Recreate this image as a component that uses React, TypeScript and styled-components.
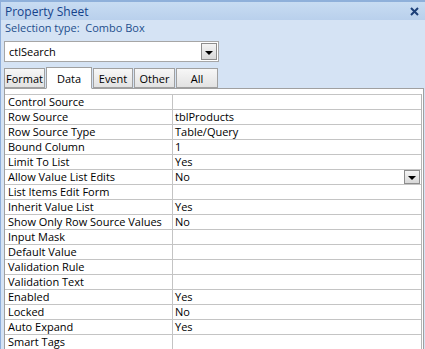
import React from "react";
import styled, { createGlobalStyle } from "styled-components";

const GlobalStyle = createGlobalStyle`
  html, body { margin: 0; padding: 0; background: #d5e3f4; }
  body { font-family: "Open Sans", "Noto Sans", sans-serif; }
`;

const Panel = styled.div`
  width: 425px;
  height: 349px;
  overflow: hidden;
  background: #d5e3f4;
  border-left: 1px solid #8eaedb;
  box-sizing: border-box;
  display: flex;
  flex-direction: column;
`;

const TitleBar = styled.div`
  height: 20px;
  box-sizing: border-box;
  border-top: 2px solid #8fb0da;
  background: linear-gradient(#c8dcf2, #b9d0ec);
  display: flex;
  align-items: center;
  justify-content: space-between;
  padding: 0 6px 0 4px;
  color: #15428b;
  font-size: 12px;
`;

const CloseIcon = styled.svg`
  width: 9px;
  height: 9px;
`;

const SelectionType = styled.div`
  height: 16px;
  padding: 0 4px;
  color: #1d4f8d;
  font-size: 11px;
  line-height: 16px;
  white-space: pre;
`;

const ComboRow = styled.div`
  padding: 5px 0 0 3px;
`;

const Combo = styled.div`
  width: 215px;
  height: 21px;
  box-sizing: border-box;
  border: 1px solid #a6a6a6;
  background: #fff;
  display: flex;
  align-items: center;
  justify-content: space-between;
  padding: 0 1px 0 4px;
  font-size: 11px;
`;

const DropButton = styled.div<{ $w: number; $h: number }>`
  width: ${(p) => p.$w}px;
  height: ${(p) => p.$h}px;
  box-sizing: border-box;
  border: 1px solid #8d8d8d;
  background: linear-gradient(#f4f4f4, #d8d8d8);
  display: flex;
  align-items: center;
  justify-content: center;
`;

const Arrow = styled.div`
  width: 0;
  height: 0;
  border-left: 4px solid transparent;
  border-right: 4px solid transparent;
  border-top: 4px solid #000;
  margin-top: 2px;
`;

const TabRow = styled.div`
  display: flex;
  align-items: flex-end;
  gap: 1px;
  padding: 5px 0 0 3px;
  height: 21px;
  box-sizing: content-box;
  position: relative;
  z-index: 1;
`;

const Tab = styled.div<{ $active?: boolean; $w: number }>`
  width: ${(p) => p.$w}px;
  height: ${(p) => (p.$active ? 22 : 20)}px;
  box-sizing: border-box;
  border: 1px solid #a0a0a0;
  border-bottom: ${(p) => (p.$active ? "1px solid #fff" : "1px solid #a0a0a0")};
  background: ${(p) =>
    p.$active ? "#fff" : "linear-gradient(#f7f7f7, #e2e2e2)"};
  font-size: 11px;
  display: flex;
  align-items: center;
  justify-content: center;
  margin-bottom: ${(p) => (p.$active ? -1 : 0)}px;
`;

const Grid = styled.div`
  margin-left: 3px;
  width: 420px;
  flex: 1;
  box-sizing: border-box;
  border: 1px solid #a0a0a0;
  border-bottom: none;
  background: #fff;
  padding: 5px 1px 0 0;
`;

const Rows = styled.div`
  border-right: 1px solid #b4b4b4;
`;

const Row = styled.div`
  display: grid;
  grid-template-columns: 168px 1fr;
  height: 15px;
  box-sizing: border-box;
  border-top: 1px solid #c4c4c4;
  font-size: 11px;
  line-height: 14px;
`;

const Label = styled.div`
  padding-left: 3px;
  border-right: 1px solid #c4c4c4;
  white-space: nowrap;
  overflow: hidden;
`;

const Value = styled.div`
  padding-left: 2px;
  display: flex;
  justify-content: space-between;
  align-items: center;
  padding-right: 1px;
  position: relative;
`;

const rows: [string, string, boolean?][] = [
  ["Control Source", ""],
  ["Row Source", "tblProducts"],
  ["Row Source Type", "Table/Query"],
  ["Bound Column", "1"],
  ["Limit To List", "Yes"],
  ["Allow Value List Edits", "No", true],
  ["List Items Edit Form", ""],
  ["Inherit Value List", "Yes"],
  ["Show Only Row Source Values", "No"],
  ["Input Mask", ""],
  ["Default Value", ""],
  ["Validation Rule", ""],
  ["Validation Text", ""],
  ["Enabled", "Yes"],
  ["Locked", "No"],
  ["Auto Expand", "Yes"],
  ["Smart Tags", ""],
];

const tabs: [string, number][] = [
  ["Format", 41],
  ["Data", 46],
  ["Event", 40],
  ["Other", 41],
  ["All", 42],
];

export default function App() {
  return (
    <>
      <GlobalStyle />
      <Panel>
        <TitleBar>
          <span>Property Sheet</span>
          <CloseIcon viewBox="0 0 9 9">
            <path d="M1 1 L8 8 M8 1 L1 8" stroke="#1c3f78" strokeWidth="2" />
          </CloseIcon>
        </TitleBar>
        <SelectionType>{"Selection type:  Combo Box"}</SelectionType>
        <ComboRow>
          <Combo>
            <span>ctlSearch</span>
            <DropButton $w={16} $h={17}>
              <Arrow />
            </DropButton>
          </Combo>
        </ComboRow>
        <TabRow>
          {tabs.map(([t, w]) => (
            <Tab key={t} $w={w} $active={t === "Data"}>
              {t}
            </Tab>
          ))}
        </TabRow>
        <Grid>
          <Rows>
            {rows.map(([l, v, dd]) => (
              <Row key={l}>
                <Label>{l}</Label>
                <Value>
                  <span>{v}</span>
                  {dd && (
                    <DropButton $w={16} $h={14}>
                      <Arrow />
                    </DropButton>
                  )}
                </Value>
              </Row>
            ))}
          </Rows>
        </Grid>
      </Panel>
    </>
  );
}
